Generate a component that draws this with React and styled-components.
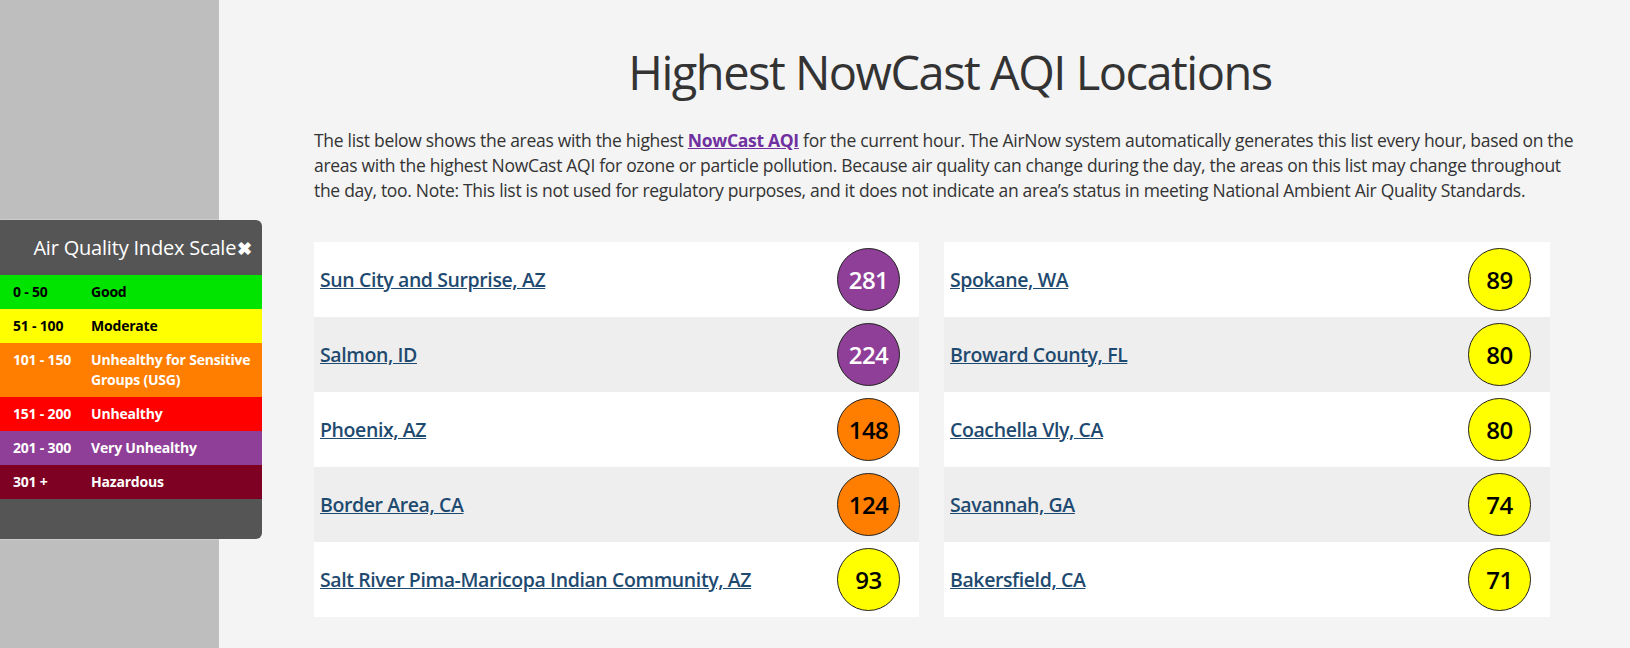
import React from 'react';
import styled, { createGlobalStyle } from "styled-components";

const Global = createGlobalStyle`
    html,body{margin:0;padding:0;background:#f4f4f4;}
    body{font-family:"Open Sans","Noto Sans",sans-serif;color:#333;}
    *{box-sizing:border-box;}
`;

const Page = styled.div`
    display:flex;width:1630px;height:648px;overflow:hidden;position:relative;
`;

const Side = styled.aside`
    width:219px;flex:none;background:#bebebe;
`;

const Main = styled.main`
    flex:1;padding:40px 0 0 95px;
`;

const Inner = styled.div`
    width:1272px;
`;

const Title = styled.h1`
    margin:0;text-align:center;font-size:47px;font-weight:400;line-height:64px;letter-spacing:-1.5px;color:#333;
`;

const Intro = styled.p`
    width:1268px;margin:24px 0 39px;font-size:17.5px;line-height:25px;letter-spacing:-0.3px;
    a{color:#7030a0;font-weight:700;text-decoration:underline;}
`;

const Grid = styled.div`
    display:grid;grid-template-columns:605px 606px;column-gap:25px;
`;

const List = styled.ul`
    list-style:none;margin:0;padding:0;
`;

const Row = styled.li`
    display:flex;align-items:center;justify-content:space-between;height:75px;padding:0 19px 0 6px;
    background:${p => p.$alt ? "#eeeeee" : "#ffffff"};
    a{color:#1f4a70;font-size:19.5px;font-weight:600;letter-spacing:-0.4px;text-decoration:underline;}
`;

const Badge = styled.span`
    width:63px;height:63px;border-radius:50%;border:1px solid #222;display:flex;align-items:center;justify-content:center;
    font-size:24px;font-weight:600;letter-spacing:-0.5px;background:${p => p.$bg};color:${p => p.$fg};
`;

const Scale = styled.div`
    position:absolute;left:0;top:220px;width:262px;background:#555;border-radius:0 6px 6px 0;padding-bottom:40px;
    box-shadow:0 0 2px rgba(255,255,255,.8);
`;

const ScaleHead = styled.div`
    height:55px;display:flex;align-items:center;justify-content:flex-end;padding-right:10px;color:#fff;font-size:20px;letter-spacing:-0.2px;
    .x{font-size:18px;margin-left:1px;font-weight:700;}
`;

const ScaleRow = styled.div`
    display:grid;grid-template-columns:78px 1fr;padding:7px 4px 7px 13px;min-height:34px;font-size:14px;font-weight:700;line-height:20px;letter-spacing:-0.2px;
    background:${p => p.$bg};color:${p => p.$fg};
`;

const levels = [
    { range: "0 - 50", label: "Good", bg: "#00e400", fg: "#000" },
    { range: "51 - 100", label: "Moderate", bg: "#ffff00", fg: "#000" },
    { range: "101 - 150", label: "Unhealthy for Sensitive Groups (USG)", bg: "#ff7e00", fg: "#fff" },
    { range: "151 - 200", label: "Unhealthy", bg: "#ff0000", fg: "#fff" },
    { range: "201 - 300", label: "Very Unhealthy", bg: "#8f3f97", fg: "#fff" },
    { range: "301 +", label: "Hazardous", bg: "#7e0023", fg: "#fff" },
];

const color = v => {
    if (v > 200) return { bg: "#8f3f97", fg: "#fff" };
    if (v > 100) return { bg: "#ff7e00", fg: "#000" };
    return { bg: "#ffff00", fg: "#000" };
};

const left = [
    ["Sun City and Surprise, AZ", 281],
    ["Salmon, ID", 224],
    ["Phoenix, AZ", 148],
    ["Border Area, CA", 124],
    ["Salt River Pima-Maricopa Indian Community, AZ", 93],
];
const right = [
    ["Spokane, WA", 89],
    ["Broward County, FL", 80],
    ["Coachella Vly, CA", 80],
    ["Savannah, GA", 74],
    ["Bakersfield, CA", 71],
];

const Column = ({ items }) => (
    <List>
        {items.map(([name, v], i) => {
            const c = color(v);
            return (
                <Row key={name} $alt={i % 2 === 1}>
                    <a href="#">{name}</a>
                    <Badge $bg={c.bg} $fg={c.fg}>{v}</Badge>
                </Row>
            );
        })}
    </List>
);

export default function App() {
    return (
        <Page>
            <Global />
            <Side />
            <Main>
                <Inner>
                    <Title>Highest NowCast AQI Locations</Title>
                    <Intro>
                        The list below shows the areas with the highest <a href="#">NowCast AQI</a> for the current hour. The AirNow system automatically generates this list every hour, based on the areas with the highest NowCast AQI for ozone or particle pollution. Because air quality can change during the day, the areas on this list may change throughout the day, too. Note: This list is not used for regulatory purposes, and it does not indicate an area’s status in meeting National Ambient Air Quality Standards.
                    </Intro>
                    <Grid>
                        <Column items={left} />
                        <Column items={right} />
                    </Grid>
                </Inner>
            </Main>
            <Scale>
                <ScaleHead>Air Quality Index Scale<span className="x">✖</span></ScaleHead>
                {levels.map(l => (
                    <ScaleRow key={l.range} $bg={l.bg} $fg={l.fg}>
                        <span>{l.range}</span>
                        <span>{l.label}</span>
                    </ScaleRow>
                ))}
            </Scale>
        </Page>
    );
}
